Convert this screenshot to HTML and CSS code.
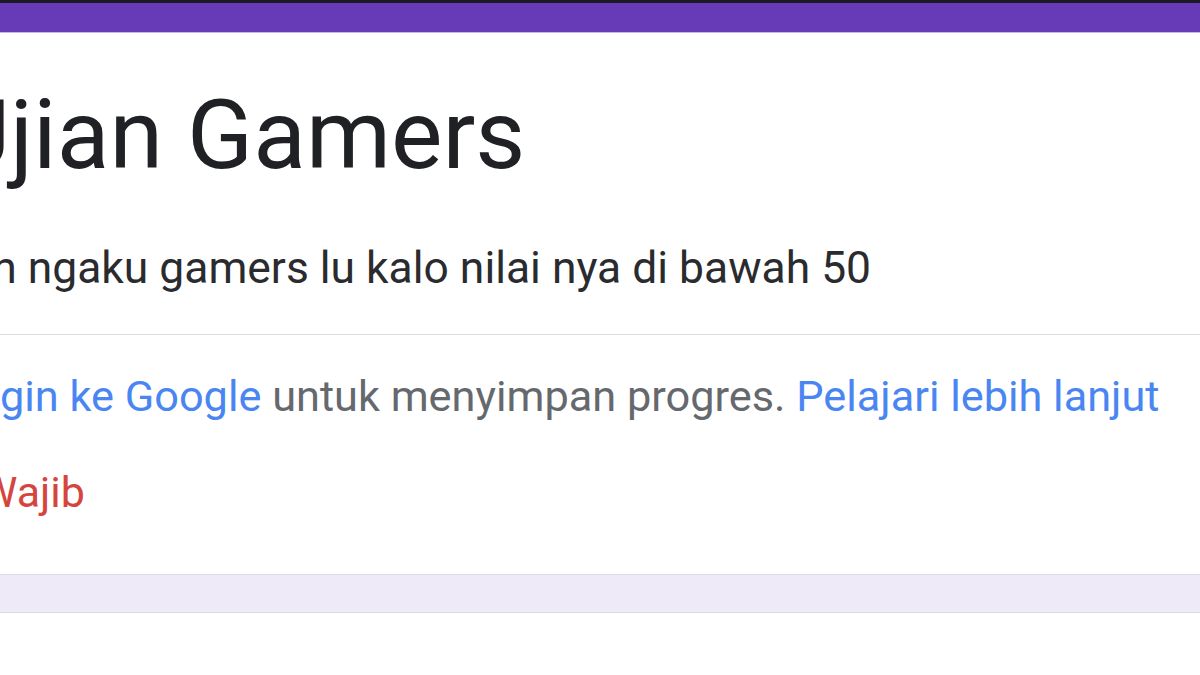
FILE: index.html
```html
<!DOCTYPE html>
<html lang="id">
<head>
<meta charset="utf-8">
<title>Ujian Gamers</title>
<link rel="stylesheet" href="styles.css">
</head>
<body>
<div class="topbar"></div>
<main class="card">
  <h1 class="title">Ujian Gamers</h1>
  <p class="desc">Jangan ngaku gamers lu kalo nilai nya di bawah 50</p>
  <hr class="divider">
  <p class="login"><a class="link">Login ke Google</a> untuk menyimpan progres. <a class="link">Pelajari lebih lanjut</a></p>
  <p class="required">* Wajib</p>
</main>
<div class="band"></div>
</body>
</html>
```
FILE: styles.css
```css
html, body {
  margin: 0;
  padding: 0;
  background: #ffffff;
  font-family: Roboto, "Noto Sans", "Liberation Sans", sans-serif;
  overflow: hidden;
}
.topbar {
  height: 29px;
  background: #673ab7;
  border-top: 3px solid #1c1a22;
  border-bottom: 1px solid #c7b5e8;
}
.card {
  display: flex;
  flex-direction: column;
  margin-left: -42px;
}
.title {
  margin: 54px 0 0 -11px;
  font-size: 97px;
  line-height: 1;
  font-weight: 400;
  color: #202124;
  white-space: nowrap;
}
.desc {
  margin: 62px 0 0 -88px;
  font-size: 44.4px;
  line-height: 1;
  color: #2a2b2e;
  white-space: nowrap;
}
.divider {
  margin: 44px 0 0 0;
  border: 0;
  border-top: 1px solid #dadce0;
  height: 0;
}
.login {
  margin: 40px 0 0 -6px;
  font-size: 43.3px;
  line-height: 1;
  color: #65686d;
  white-space: nowrap;
}
.link {
  color: #4a86f2;
}
.required {
  margin: 52px 0 0 -8px;
  font-size: 43px;
  line-height: 1;
  color: #d6453d;
  white-space: nowrap;
}
.band {
  margin-top: 60px;
  height: 37px;
  background: #efeaf8;
  border-top: 1px solid #dcdce0;
  border-bottom: 1px solid #dcdce0;
}
```
